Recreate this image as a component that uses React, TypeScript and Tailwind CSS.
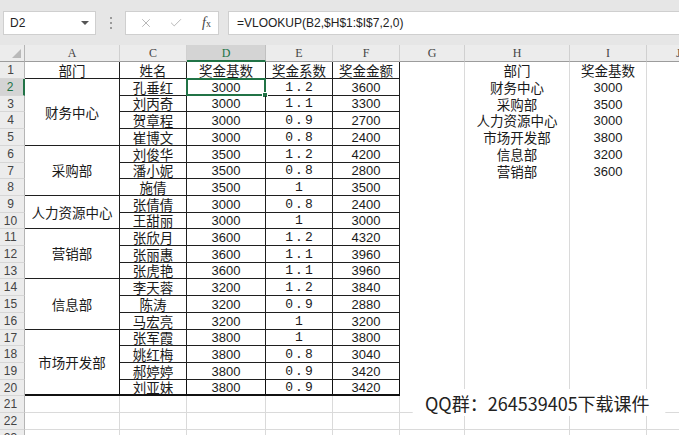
import { X, Check } from "lucide-react";

type Row = {
  n: number;
  dept?: [string, number];
  name: string;
  base: string;
  k: string;
  amt: string;
  h?: string;
  i?: string;
};

const data: Row[] = [
  { n: 2, dept: ["财务中心", 4], name: "孔垂红", base: "3000", k: "1.2", amt: "3600", h: "财务中心", i: "3000" },
  { n: 3, name: "刘丙奇", base: "3000", k: "1.1", amt: "3300", h: "采购部", i: "3500" },
  { n: 4, name: "贺章程", base: "3000", k: "0.9", amt: "2700", h: "人力资源中心", i: "3000" },
  { n: 5, name: "崔博文", base: "3000", k: "0.8", amt: "2400", h: "市场开发部", i: "3800" },
  { n: 6, dept: ["采购部", 3], name: "刘俊华", base: "3500", k: "1.2", amt: "4200", h: "信息部", i: "3200" },
  { n: 7, name: "潘小妮", base: "3500", k: "0.8", amt: "2800", h: "营销部", i: "3600" },
  { n: 8, name: "施倩", base: "3500", k: "1", amt: "3500" },
  { n: 9, dept: ["人力资源中心", 2], name: "张倩倩", base: "3000", k: "0.8", amt: "2400" },
  { n: 10, name: "王甜丽", base: "3000", k: "1", amt: "3000" },
  { n: 11, dept: ["营销部", 3], name: "张欣月", base: "3600", k: "1.2", amt: "4320" },
  { n: 12, name: "张丽惠", base: "3600", k: "1.1", amt: "3960" },
  { n: 13, name: "张虎艳", base: "3600", k: "1.1", amt: "3960" },
  { n: 14, dept: ["信息部", 3], name: "李天蓉", base: "3200", k: "1.2", amt: "3840" },
  { n: 15, name: "陈涛", base: "3200", k: "0.9", amt: "2880" },
  { n: 16, name: "马宏亮", base: "3200", k: "1", amt: "3200" },
  { n: 17, dept: ["市场开发部", 4], name: "张军霞", base: "3800", k: "1", amt: "3800" },
  { n: 18, name: "姚红梅", base: "3800", k: "0.8", amt: "3040" },
  { n: 19, name: "郝婷婷", base: "3800", k: "0.9", amt: "3420" },
  { n: 20, name: "刘亚妹", base: "3800", k: "0.9", amt: "3420" },
];

const spans: Record<number, string> = { 2: "row-span-2", 3: "row-span-3", 4: "row-span-4" };

const cjk = "font-['Noto_Sans_CJK_SC',sans-serif] text-[13.5px] leading-[15px] text-[#1a1a1a]";
const num = "font-['Liberation_Sans',sans-serif] text-[13px] leading-[15px] text-[#1a1a1a]";
const mono = "font-['Liberation_Mono',monospace] text-[13px] leading-[15px] tracking-[2px] pl-[2px] text-[#1a1a1a]";
const cell = "flex items-center justify-center whitespace-nowrap";
const tb = "border-r border-b border-[#1f1f1f]";
const gridCell = "border-r border-b border-[#dadada]";
const free = "border-r border-[#dadada]";
const rowHead =
  "flex items-center justify-center pr-[3px] bg-[#ececec] border-r border-b border-r-[#b5b5b5] border-b-[#d6d6d6] font-['Liberation_Sans',sans-serif] text-[12px] leading-[14px] text-[#444]";
const colHead =
  "flex items-center justify-center bg-[#ececec] border-r border-b border-r-[#d0d0d0] border-b-[#9c9c9c] font-['Liberation_Serif',serif] text-[12px] leading-[14px] text-[#444]";

function Row({ r }: { r: Row }) {
  const last = r.n === 20;
  const b = last ? "border-r border-b-2 border-[#111]" : tb;
  return (
    <>
      <div
        className={
          r.n === 2
            ? "flex items-center justify-center pr-[3px] bg-[#d4d4d4] border-b border-b-[#d6d6d6] border-r-2 border-r-[#217346] font-['Liberation_Sans',sans-serif] text-[12px] leading-[14px] text-[#217346]"
            : rowHead
        }
      >
        {r.n}
      </div>
      {r.dept && (
        <div
          className={`${cell} ${cjk} ${spans[r.dept[1]]} ${r.n === 17 ? "border-r border-b-2 border-[#111]" : tb}`}
        >
          {r.dept[0]}
        </div>
      )}
      <div className={`${cell} ${cjk} ${b}`}>{r.name}</div>
      <div className={`${cell} ${num} ${b} relative`}>
        {r.base}
        {r.n === 2 && (
          <div className="absolute -left-[1px] -top-[1px] -right-[1px] -bottom-[1px] border-2 border-[#217346]">
            <div className="absolute -right-[4px] -bottom-[4px] w-[6px] h-[6px] bg-[#217346] border border-white" />
          </div>
        )}
      </div>
      <div className={`${cell} ${mono} ${b}`}>{r.k}</div>
      <div className={`${cell} ${num} ${b}`}>{r.amt}</div>
      <div className={free} />
      <div className={`${cell} ${cjk} ${free}`}>{r.h}</div>
      <div className={`${cell} ${num} ${free}`}>{r.i}</div>
      <div className={free} />
    </>
  );
}

function Blank({ n }: { n: number }) {
  return (
    <>
      <div className={rowHead}>{n}</div>
      <div className={gridCell} />
      <div className={gridCell} />
      <div className={gridCell} />
      <div className={gridCell} />
      <div className={gridCell} />
      <div className={gridCell} />
      <div className={gridCell} />
      <div className={gridCell} />
      <div className={gridCell} />
    </>
  );
}

export default function App() {
  return (
    <div className="relative w-[679px] h-[435px] overflow-hidden bg-white">
      {/* formula bar */}
      <div className="h-[45px] bg-[#e6e6e6] flex items-start pt-[11px]">
        <div className="relative ml-[3px] w-[93px] h-[24px] bg-white border border-[#cfcfcf] flex items-center pl-[6px] font-['Liberation_Sans',sans-serif] text-[12px] text-[#222]">
          D2
          <div className="absolute right-[6px] top-[9px] w-0 h-0 border-l-[4px] border-r-[4px] border-t-[4px] border-l-transparent border-r-transparent border-t-[#555]" />
        </div>
        <div className="w-[29px] h-[24px] flex flex-col items-center justify-center gap-[3px]">
          <div className="w-[2px] h-[2px] bg-[#9a9a9a]" />
          <div className="w-[2px] h-[2px] bg-[#9a9a9a]" />
          <div className="w-[2px] h-[2px] bg-[#9a9a9a]" />
        </div>
        <div className="w-[94px] h-[24px] bg-white border border-[#cfcfcf] flex items-center pl-[13px]">
          <X size={14} strokeWidth={1.4} color="#a8a8a8" />
          <Check size={14} strokeWidth={1.4} color="#a8a8a8" className="ml-[16px]" />
          <span className="ml-[19px] font-['Liberation_Serif',serif] italic text-[14px] text-[#444] leading-none">
            f<span className="text-[10px] not-italic">x</span>
          </span>
        </div>
        <div className="ml-[9px] flex-1 h-[24px] bg-white border border-[#cfcfcf] border-r-0 flex items-center pl-[8px] font-['Liberation_Sans',sans-serif] text-[12px] text-[#222]">
          =VLOOKUP(B2,$H$1:$I$7,2,0)
        </div>
      </div>

      {/* sheet grid */}
      <div className="grid grid-cols-[25px_95px_67px_79px_67px_67px_65px_105px_77px_64px] grid-rows-[17px_17px_17px_16px_17px_17px_17px_16px_17px_17px_16px_17px_17px_16px_17px_17px_17px_16px_17px_17px_16px_17px_17px_16px_17px]">
        <div className="relative bg-[#ececec] border-r border-b border-r-[#b5b5b5] border-b-[#9c9c9c]">
          <svg className="absolute right-[3px] bottom-[3px]" width="9" height="9" viewBox="0 0 9 9">
            <polygon points="9,0 9,9 0,9" fill="#b9b9b9" />
          </svg>
        </div>
        <div className={colHead}>A</div>
        <div className={colHead}>C</div>
        <div className="flex items-center justify-center bg-[#d4d4d4] border-r border-r-[#c0c0c0] border-b-2 border-b-[#217346] font-['Liberation_Serif',serif] text-[12px] leading-[14px] text-[#217346]">
          D
        </div>
        <div className={colHead}>E</div>
        <div className={colHead}>F</div>
        <div className={colHead}>G</div>
        <div className={colHead}>H</div>
        <div className={colHead}>I</div>
        <div className={`${colHead} justify-start pl-[29px]`}>J</div>

        {/* row 1 */}
        <div className={rowHead}>1</div>
        <div className={`${cell} ${cjk} ${tb}`}>部门</div>
        <div className={`${cell} ${cjk} ${tb}`}>姓名</div>
        <div className={`${cell} ${cjk} ${tb}`}>奖金基数</div>
        <div className={`${cell} ${cjk} ${tb}`}>奖金系数</div>
        <div className={`${cell} ${cjk} ${tb}`}>奖金金额</div>
        <div className={free} />
        <div className={`${cell} ${cjk} ${free}`}>部门</div>
        <div className={`${cell} ${cjk} ${free}`}>奖金基数</div>
        <div className={free} />

        {data.map((r) => (
          <Row key={r.n} r={r} />
        ))}
        <Blank n={21} />
        <Blank n={22} />
        <Blank n={23} />
      </div>

      {/* watermark */}
      <div className="absolute left-[412px] top-[389px] w-[254px] h-[27px] bg-white rounded-[6px] flex items-center pl-[13px] font-['Noto_Sans_CJK_SC',sans-serif] text-[18px] text-[#222] leading-none">
        QQ群：264539405下载课件
      </div>
    </div>
  );
}
